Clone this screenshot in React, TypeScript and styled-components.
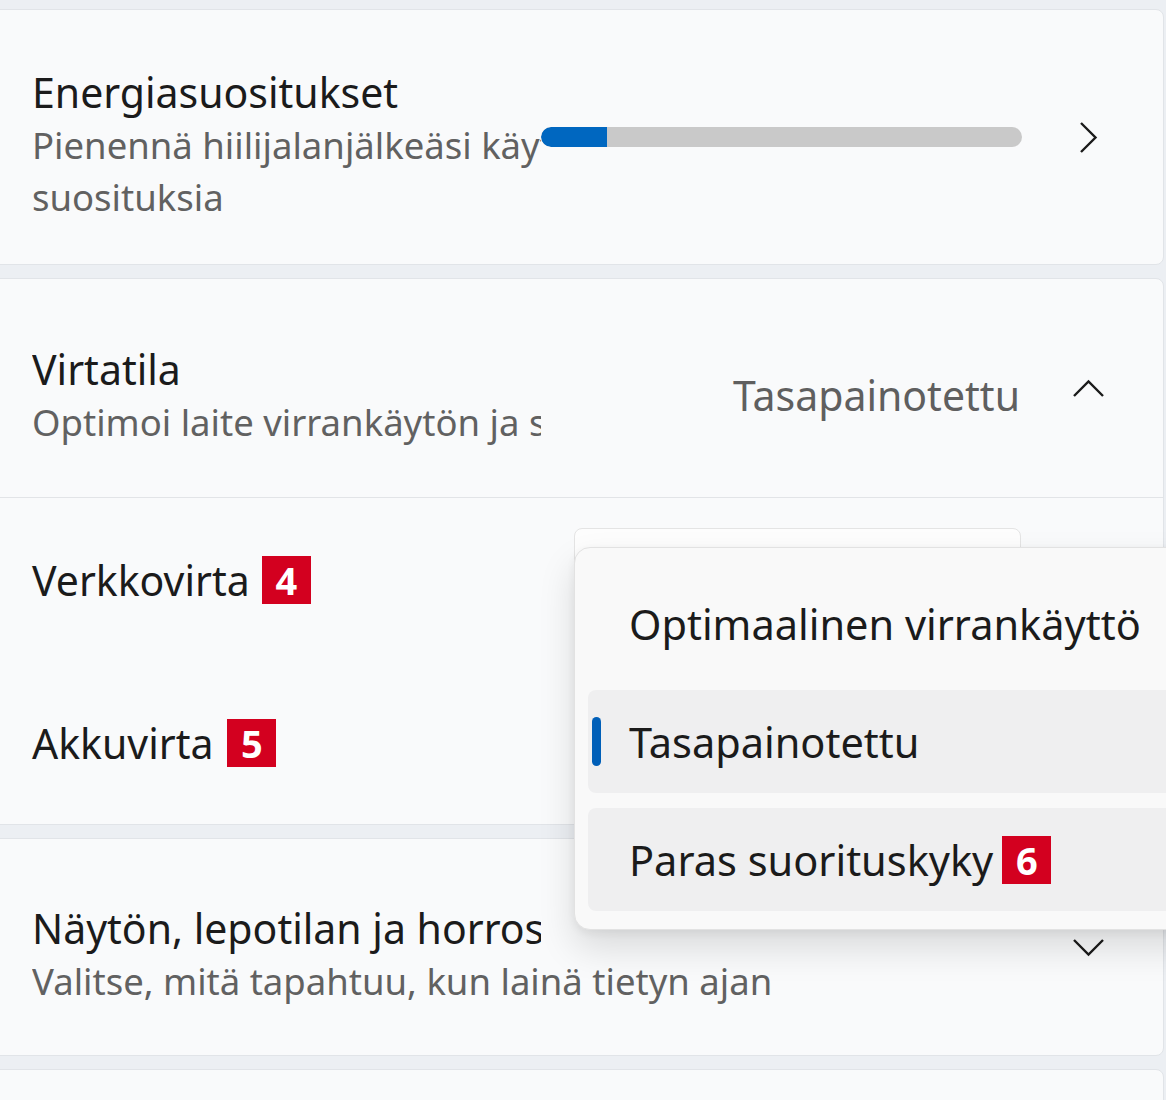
import React from "react";
import styled, { createGlobalStyle } from "styled-components";

const GlobalStyle = createGlobalStyle`
  html, body {
    margin: 0;
    padding: 0;
    background: #eceff3;
  }
  body {
    font-family: "Noto Sans", "Open Sans", sans-serif;
    color: #1b1b1b;
    overflow: hidden;
  }
`;

const Page = styled.main`
  display: flex;
  flex-direction: column;
  gap: 13px;
  padding: 9px 2px 0 0;
  height: 1100px;
  box-sizing: border-box;
  overflow: hidden;
`;

const Card = styled.section`
  margin-left: -12px;
  background: #f9fafb;
  border: 1px solid #e1e4e8;
  border-radius: 8px;
  flex-shrink: 0;
`;

const Row = styled.div<{ $h: number; $pr: number }>`
  display: flex;
  align-items: center;
  height: ${(p) => p.$h}px;
  padding: 0 ${(p) => p.$pr}px 0 43px;
`;

const TextCol = styled.div`
  display: flex;
  flex-direction: column;
  min-width: 0;
  flex-shrink: 0;
  padding-top: 14px;
`;

const Title = styled.div<{ $clip?: boolean }>`
  font-size: 41px;
  line-height: 53px;
  white-space: nowrap;
  overflow: hidden;
  max-width: ${(p) => (p.$clip ? "509px" : "none")};
`;

const Sub = styled.div<{ $clip?: boolean }>`
  font-size: 36.5px;
  line-height: 52px;
  color: #616161;
  white-space: nowrap;
  overflow: hidden;
  max-width: ${(p) => (p.$clip ? "509px" : "none")};
`;

const Track = styled.div`
  width: 481px;
  height: 20px;
  border-radius: 10px;
  background: #c9c9c9;
  overflow: hidden;
  flex-shrink: 0;
`;

const Fill = styled.div`
  height: 100%;
  background: #0067c0;
  border-radius: 10px 0 0 10px;
`;

const Spacer = styled.div`
  flex: 1;
`;

const Value = styled.span`
  font-size: 41px;
  color: #5f5f5f;
  white-space: nowrap;
  padding-top: 14px;
`;

const IconSlot = styled.span<{ $ml: number }>`
  display: inline-flex;
  margin-left: ${(p) => p.$ml}px;
`;

const Content = styled.div`
  border-top: 1px solid #e2e4e7;
`;

const Label = styled.div`
  display: flex;
  align-items: center;
  font-size: 41px;
  white-space: nowrap;
`;

const Badge = styled.span<{ $ml: number }>`
  display: inline-flex;
  align-items: center;
  justify-content: center;
  width: 49px;
  height: 48px;
  margin-left: ${(p) => p.$ml}px;
  background: #d3001f;
  color: #fff;
  font-family: "Open Sans", "Noto Sans", sans-serif;
  font-weight: 700;
  font-size: 38px;
  line-height: 1;
`;

const ComboWrap = styled.div`
  position: relative;
  margin-left: auto;
`;

const Combo = styled.div`
  width: 447px;
  height: 103px;
  box-sizing: border-box;
  background: #fdfdfd;
  border: 1px solid #e4e4e4;
  border-radius: 8px;
`;

const Menu = styled.div`
  position: absolute;
  top: 19px;
  left: 0;
  z-index: 10;
  width: 640px;
  box-sizing: border-box;
  display: flex;
  flex-direction: column;
  gap: 15px;
  padding: 24px 0 18px 13px;
  background: #f9f9f9;
  border: 1px solid #e2e2e2;
  border-radius: 16px;
  box-shadow: 0 18px 36px rgba(0, 0, 0, 0.13), 0 3px 8px rgba(0, 0, 0, 0.06);
`;

const Option = styled.div<{ $active?: boolean }>`
  position: relative;
  display: flex;
  align-items: center;
  height: 103px;
  padding-left: 41px;
  border-radius: 8px;
  background: ${(p) => (p.$active ? "#efeff0" : "transparent")};
  font-size: 41.5px;
  white-space: nowrap;
`;

const Indicator = styled.span`
  position: absolute;
  left: 4px;
  top: 27px;
  width: 9px;
  height: 49px;
  border-radius: 5px;
  background: #005fb8;
`;

function Chevron({ dir }: { dir: "right" | "up" | "down" }) {
  if (dir === "right") {
    return (
      <svg width="20" height="33" viewBox="0 0 20 33">
        <polyline points="3,2 17.5,16.5 3,31" fill="none" stroke="#1b1b1b" strokeWidth="2.4" />
      </svg>
    );
  }
  const pts = dir === "up" ? "2,17 16.5,2.5 31,17" : "2,2 16.5,16.5 31,2";
  return (
    <svg width="33" height="19" viewBox="0 0 33 19">
      <polyline points={pts} fill="none" stroke="#1b1b1b" strokeWidth="2.4" />
    </svg>
  );
}

export default function App() {
  const progress = 13.7;

  return (
    <>
      <GlobalStyle />
      <Page>
        <Card>
          <Row $h={254} $pr={65}>
            <TextCol>
              <Title>Energiasuositukset</Title>
              <Sub $clip>Pienennä hiilijalanjälkeäsi käyttämällä energia-</Sub>
              <Sub>suosituksia</Sub>
            </TextCol>
            <Track>
              <Fill style={{ width: `${progress}%` }} />
            </Track>
            <Spacer />
            <Chevron dir="right" />
          </Row>
        </Card>

        <Card>
          <Row $h={218} $pr={58}>
            <TextCol>
              <Title>Virtatila</Title>
              <Sub $clip>Optimoi laite virrankäytön ja suorituskyvyn mukaan</Sub>
            </TextCol>
            <Spacer />
            <Value>Tasapainotettu</Value>
            <IconSlot $ml={52}>
              <Chevron dir="up" />
            </IconSlot>
          </Row>
          <Content>
            <Row $h={163} $pr={142}>
              <Label>
                Verkkovirta<Badge $ml={12}>4</Badge>
              </Label>
              <ComboWrap>
                <Combo />
                <Menu>
                  <Option>Optimaalinen virrankäyttö</Option>
                  <Option $active>
                    <Indicator />
                    Tasapainotettu
                  </Option>
                  <Option $active>
                    Paras suorituskyky<Badge $ml={9}>6</Badge>
                  </Option>
                </Menu>
              </ComboWrap>
            </Row>
            <Row $h={163} $pr={142}>
              <Label>
                Akkuvirta<Badge $ml={14}>5</Badge>
              </Label>
              <ComboWrap>
                <Combo />
              </ComboWrap>
            </Row>
          </Content>
        </Card>

        <Card>
          <Row $h={216} $pr={58}>
            <TextCol>
              <Title $clip>Näytön, lepotilan ja horrostilan aikakatkaisut</Title>
              <Sub>Valitse, mitä tapahtuu, kun lainä tietyn ajan</Sub>
            </TextCol>
            <Spacer />
            <Chevron dir="down" />
          </Row>
        </Card>

        <Card>
          <Row $h={120} $pr={58} />
        </Card>
      </Page>
    </>
  );
}
